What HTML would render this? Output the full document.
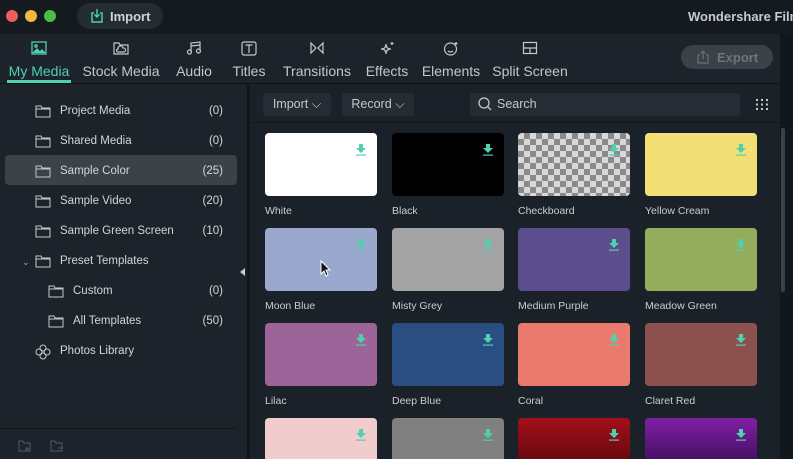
<!DOCTYPE html>
<html><head><style>
*{margin:0;padding:0;box-sizing:border-box}
html,body{width:793px;height:459px;overflow:hidden}
body{background:#1b2128;font-family:"Liberation Sans",sans-serif;position:relative;color:#c9ced3}
.abs{position:absolute}
#top{left:0;top:0;width:793px;height:34px;background:#141a20}
.dot{width:12px;height:12px;border-radius:50%;top:10px}
#tabs{left:0;top:34px;width:780px;height:50px;background:#1c232a;border-bottom:1px solid #0f1418}
.tab{top:0;height:50px;text-align:center;font-size:14px;color:#c3c8cd}
.tab .l{position:absolute;top:29px;left:-10px;right:-10px;white-space:nowrap}
.tab svg{position:absolute;top:7px;left:50%;margin-left:-8px}
#side{left:0;top:85px;width:247px;height:374px;background:#1c232a}
.row{left:5px;width:232px;height:30px;font-size:11.5px;color:#d2d6da}
.row .n{position:absolute;left:55px;top:8px}
.row .c{position:absolute;right:14px;top:8px}
.row svg{position:absolute;left:30px;top:8px}
.sub svg{left:43px}.sub .n{left:68px}
#gap{left:247px;top:85px;width:3px;height:374px;background:#12171c}
#content{left:250px;top:85px;width:530px;height:374px;background:#1b2128}
.btn{top:93px;height:23px;background:#252c33;border-radius:3px;font-size:12.5px;color:#c3c8cd;line-height:23px;text-align:center}
.th{width:112px;height:63px;border-radius:4px}
.lab{font-size:10.5px;color:#c9ced3}
.dl{position:absolute;right:10px;top:10px}
</style></head><body>
<div id="top" class="abs">
 <div class="abs dot" style="left:6px;background:#ec5f57"></div>
 <div class="abs dot" style="left:25px;background:#f4b83f"></div>
 <div class="abs dot" style="left:44px;background:#48c043"></div>
 <div class="abs" style="left:77px;top:3px;width:86px;height:26px;border-radius:13px;background:#232b33"></div>
 <svg class="abs" style="left:90px;top:8px" width="14" height="15" viewBox="0 0 14 15" fill="none" stroke="#4fd1b0" stroke-width="1.4"><path d="M4 5H2v9h10V5h-2M7 1v8M4.5 6.5L7 9l2.5-2.5"/></svg>
 <div class="abs" style="left:110px;top:9px;font-size:13px;font-weight:bold;color:#cfd4d8">Import</div>
 <div class="abs" style="left:688px;top:9px;font-size:13px;font-weight:bold;color:#c6cbd0;white-space:nowrap">Wondershare Filmora</div>
</div>
<div class="abs" style="left:780px;top:34px;width:13px;height:425px;background:#12171c"></div>
<div id="tabs" class="abs">
 <div class="abs tab" style="left:5px;width:68px;color:#4fd1b0"><svg width="16" height="14" viewBox="0 0 16 14" fill="none" stroke="#4fd1b0" stroke-width="1.3"><rect x="1" y="1" width="14" height="12"/><path d="M2 12l4-4 3 3 2-2 3 3" fill="#4fd1b0"/><circle cx="5" cy="5" r="1.2"/></svg><div class="l">My Media</div></div>
 <div class="abs" style="left:7px;top:46px;width:64px;height:3px;background:#4fd1b0"></div>
 <div class="abs tab" style="left:82px;width:78px"><svg width="16" height="14" viewBox="0 0 16 14" fill="none" stroke="#c3c8cd" stroke-width="1.2"><path d="M1 2h5l1 2h8v9H1z"/><path d="M5 11h6a2 2 0 0 0-1-4 2.5 2.5 0 0 0-5 1 1.5 1.5 0 0 0 0 3"/></svg><div class="l">Stock Media</div></div>
 <div class="abs tab" style="left:172px;width:44px"><svg width="16" height="14" viewBox="0 0 16 14" fill="none" stroke="#c3c8cd" stroke-width="1.2"><path d="M5 11V2l9-1v9"/><circle cx="3.5" cy="11" r="2"/><circle cx="12.5" cy="10" r="2"/><path d="M5 5l9-1"/></svg><div class="l">Audio</div></div>
 <div class="abs tab" style="left:228px;width:42px"><svg width="16" height="15" viewBox="0 0 16 15" fill="none" stroke="#c3c8cd" stroke-width="1.2"><rect x="1" y="1" width="14" height="13" rx="2"/><path d="M4.5 4h7M8 4v8"/></svg><div class="l">Titles</div></div>
 <div class="abs tab" style="left:282px;width:70px"><svg width="16" height="14" viewBox="0 0 16 14" fill="none" stroke="#c3c8cd" stroke-width="1.2"><path d="M2 2v10l5-5zM14 2v10L9 7z"/></svg><div class="l">Transitions</div></div>
 <div class="abs tab" style="left:364px;width:46px"><svg width="16" height="15" viewBox="0 0 16 15" fill="none" stroke="#c3c8cd" stroke-width="1.2"><path d="M7 3q0 5 5 5-5 0-5 5 0-5-5-5 5 0 5-5zM13 1v3M11.5 2.5h3"/></svg><div class="l">Effects</div></div>
 <div class="abs tab" style="left:422px;width:58px"><svg width="16" height="15" viewBox="0 0 16 15" fill="none" stroke="#c3c8cd" stroke-width="1.2"><circle cx="7.5" cy="8" r="6"/><path d="M5 10q2.5 2 5 0M5.5 6.5h.1M9.5 6.5h.1M13 1v3M11.5 2.5h3"/></svg><div class="l">Elements</div></div>
 <div class="abs tab" style="left:492px;width:76px"><svg width="16" height="14" viewBox="0 0 16 14" fill="none" stroke="#c3c8cd" stroke-width="1.2"><rect x="1.5" y="1.5" width="13" height="11"/><path d="M1.5 7h13M8 7v5.5"/></svg><div class="l">Split Screen</div></div>
 <div class="abs" style="left:681px;top:11px;width:92px;height:24px;border-radius:12px;background:#3a4249"></div>
 <svg class="abs" style="left:697px;top:16px" width="12" height="14" viewBox="0 0 12 14" fill="none" stroke="#6a7177" stroke-width="1.2"><path d="M3 5H1v8h10V5H9M6 9V1M3.5 3.5L6 1l2.5 2.5"/></svg>
 <div class="abs" style="left:717px;top:16px;font-size:13px;font-weight:bold;color:#6e757b">Export</div>
</div>
<div id="side" class="abs">
 <div class="abs" style="left:5px;top:70px;width:232px;height:30px;border-radius:4px;background:#3b4349"></div>
 <div class="abs" style="left:0;top:343px;width:236px;height:1px;background:#12171c"></div>
 <svg class="abs" style="left:18px;top:355px" width="14" height="12" viewBox="0 0 14 12" fill="none" stroke="#555d64"><path d="M1 1h4l1 2h6v8H1zM9 7v4M7 9h4"/></svg>
 <svg class="abs" style="left:50px;top:355px" width="14" height="12" viewBox="0 0 14 12" fill="none" stroke="#555d64"><path d="M1 1h4l1 2h6v8H1zM8 8h4"/></svg>
</div>
<div class="abs" style="left:22px;top:257px;font-size:9px;color:#aab">&#x2304;</div>
<div id="rows"></div>
<div id="gap" class="abs"></div>
<div class="abs" style="left:240px;top:268px;width:0;height:0;border-top:4px solid transparent;border-bottom:4px solid transparent;border-right:5px solid #c3c8cd"></div>
<div id="content" class="abs"></div>
<div class="abs" style="left:250px;top:122px;width:530px;height:1px;background:#12171c"></div>
<div class="abs btn" style="left:263px;width:68px">Import &#x2335;</div>
<div class="abs btn" style="left:342px;width:72px">Record &#x2335;</div>
<div class="abs btn" style="left:470px;width:270px;text-align:left;padding-left:27px">Search</div>
<svg class="abs" style="left:478px;top:97px" width="14" height="14" viewBox="0 0 14 14" fill="none" stroke="#c3c8cd" stroke-width="1.3"><circle cx="6" cy="6" r="5"/><path d="M9.5 9.5L13 13"/></svg>
<svg class="abs" style="left:755px;top:98px" width="14" height="13"><g fill="#c3c8cd"><rect x="1" y="1" width="2" height="2"/><rect x="6" y="1" width="2" height="2"/><rect x="11" y="1" width="2" height="2"/><rect x="1" y="5.5" width="2" height="2"/><rect x="6" y="5.5" width="2" height="2"/><rect x="11" y="5.5" width="2" height="2"/><rect x="1" y="10" width="2" height="2"/><rect x="6" y="10" width="2" height="2"/><rect x="11" y="10" width="2" height="2"/></g></svg>
<div class="abs" style="left:781px;top:128px;width:4px;height:164px;border-radius:2px;background:#3a4249"></div>
<div id="grid"></div>
<svg class="abs" style="left:320px;top:260px" width="12" height="17" viewBox="0 0 12 17"><path d="M1 1v13l3-3 2 5 2-1-2-5h4z" fill="#111" stroke="#fff" stroke-width="1"/></svg>
<script>
const rows=[["Project Media","(0)",0],["Shared Media","(0)",0],["Sample Color","(25)",0],["Sample Video","(20)",0],["Sample Green Screen","(10)",0],["Preset Templates","",0],["Custom","(0)",1],["All Templates","(50)",1],["Photos Library","",2]];
let h="";rows.forEach((r,i)=>{const y=97+i*30;
const ic=r[2]==2?'<svg style="left:30px;top:7px" width="16" height="16" viewBox="0 0 16 16" fill="none" stroke="#c3c8cd" stroke-width="1"><circle cx="8" cy="4" r="3"/><circle cx="8" cy="12" r="3"/><circle cx="4" cy="8" r="3"/><circle cx="12" cy="8" r="3"/></svg>':'<svg width="16" height="13" viewBox="0 0 16 13" fill="none" stroke="#c3c8cd" stroke-width="1"><path d="M1 1h5l1 2h8v9H1zM1 4h14"/></svg>';
h+=`<div class="abs row${r[2]==1?' sub':''}" style="top:${y}px">${ic}<span class="n">${r[0]}</span><span class="c">${r[1]}</span></div>`});
document.getElementById('rows').innerHTML=h;
const items=[["White","#ffffff"],["Black","#000000"],["Checkboard","ck"],["Yellow Cream","#f2e077"],["Moon Blue","#9ba8ce"],["Misty Grey","#a3a3a3"],["Medium Purple","#5c4d8c"],["Meadow Green","#94ad5d"],["Lilac","#9c6499"],["Deep Blue","#2a4e82"],["Coral","#ea7a6d"],["Claret Red","#8c514d"],["","#f0cccc"],["","#808080"],["","linear-gradient(#a3101a,#4a0508)"],["","linear-gradient(#7f1fa6,#2a0a40)"]];
const xs=[265,392,518,645];let g="";
const dl='<svg class="dl" width="12" height="13" viewBox="0 0 12 13"><path d="M4 1h4v4h3L6 10 1 5h3z" fill="#4fd1b0"/><rect x="1" y="11.5" width="10" height="1.2" fill="#4fd1b0"/></svg>';
items.forEach((it,i)=>{const x=xs[i%4],y=133+Math.floor(i/4)*95;
let bg=it[1]=="ck"?"background:repeating-conic-gradient(#8a8a8a 0 25%,#d8d8d8 0 50%) 0 0/12px 12px":"background:"+it[1];
g+=`<div class="abs th" style="left:${x}px;top:${y}px;${bg}">${dl}</div><div class="abs lab" style="left:${x}px;top:${y+72}px">${it[0]}</div>`});
document.getElementById('grid').innerHTML=g;
</script>
</body></html>
